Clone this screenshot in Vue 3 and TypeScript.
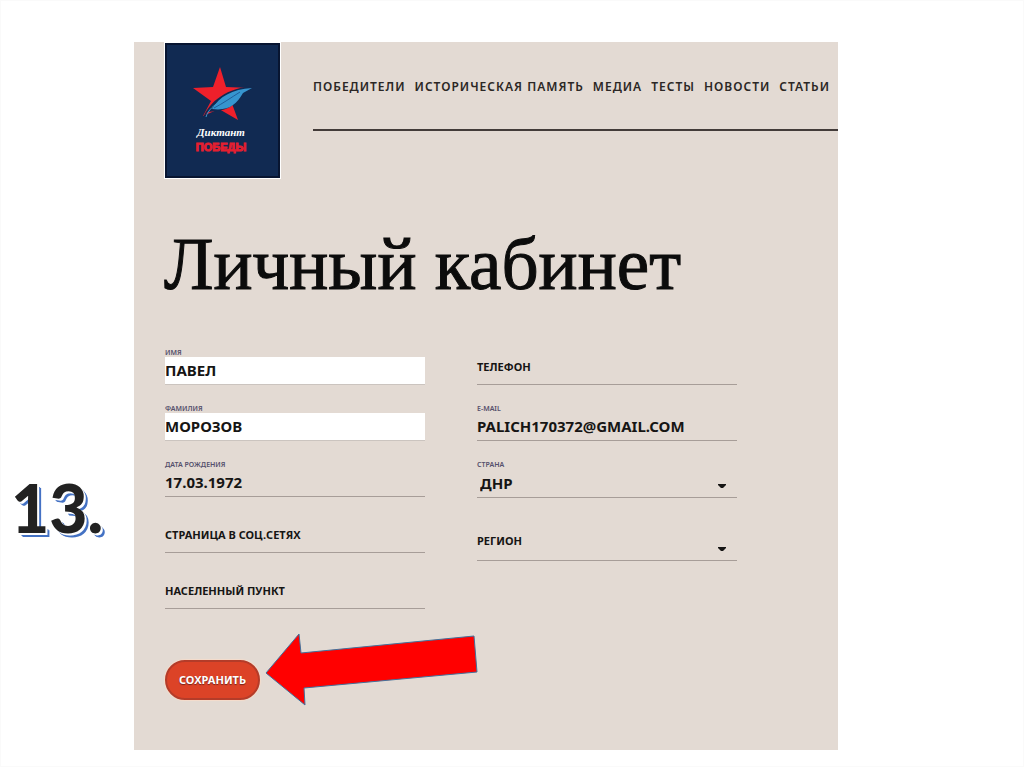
<script setup lang="ts">
import { reactive } from 'vue'

interface Field {
  id: string
  label: string
  type: 'text' | 'email' | 'tel' | 'select'
  floating: boolean
  filled?: boolean
}

const menu: string[] = ['ПОБЕДИТЕЛИ', 'ИСТОРИЧЕСКАЯ ПАМЯТЬ', 'МЕДИА', 'ТЕСТЫ', 'НОВОСТИ', 'СТАТЬИ']

const columns: Field[][] = [
  [
    { id: 'name', label: 'ИМЯ', type: 'text', floating: true, filled: true },
    { id: 'surname', label: 'ФАМИЛИЯ', type: 'text', floating: true, filled: true },
    { id: 'birth', label: 'ДАТА РОЖДЕНИЯ', type: 'text', floating: true },
    { id: 'social', label: 'СТРАНИЦА В СОЦ.СЕТЯХ', type: 'text', floating: false },
    { id: 'town', label: 'НАСЕЛЕННЫЙ ПУНКТ', type: 'text', floating: false },
  ],
  [
    { id: 'phone', label: 'ТЕЛЕФОН', type: 'tel', floating: false },
    { id: 'email', label: 'E-MAIL', type: 'email', floating: true },
    { id: 'country', label: 'СТРАНА', type: 'select', floating: true },
    { id: 'region', label: 'РЕГИОН', type: 'select', floating: false },
  ],
]

const values = reactive<Record<string, string>>({
  name: 'ПАВЕЛ',
  surname: 'МОРОЗОВ',
  birth: '17.03.1972',
  social: '',
  town: '',
  phone: '',
  email: 'PALICH170372@GMAIL.COM',
  country: 'ДНР',
  region: '',
})
</script>

<template>
  <div class="slide">
    <div class="step">13.</div>
    <main class="panel">
      <header class="header">
        <a class="logo" href="#" aria-label="Диктант Победы">
          <svg viewBox="0 0 113 133" width="113" height="133" aria-hidden="true">
            <path fill="#ee202b" d="M54 23 60 43 85 44 65 57 72 76 53 65 37 72 45 57 27 44 47 43Z" />
            <path fill="#112a52" d="M37 74C43 58 61 43 89 42L77 50C66 66 55 67 42 68Z" />
            <path fill="#3695cf" d="M46 65C53 53 66 45 86 44L77 49C70 61 63 67 46 65Z" />
            <path fill="none" stroke="#3695cf" d="M40 73C42 66 48 61 55 57" />
            <path fill="none" stroke="#1f5f9a" d="M48 64C56 60 66 53 74 48" />
            <text class="logo-script" x="55" y="92" text-anchor="middle">Диктант</text>
            <text class="logo-bold" x="55" y="107" text-anchor="middle">ПОБЕДЫ</text>
          </svg>
        </a>
        <nav class="menu">
          <a v-for="item in menu" :key="item" href="#">{{ item }}</a>
        </nav>
      </header>

      <h1>Личный кабинет</h1>

      <form @submit.prevent>
        <div class="fields">
          <div v-for="(column, index) in columns" :key="index" class="column">
            <div v-for="field in column" :key="field.id" class="field" :class="[field.type, { floating: field.floating, filled: field.filled }]">
              <label :for="field.id">{{ field.label }}</label>
              <div v-if="field.type === 'select'" class="select-box">
                <select :id="field.id" v-model="values[field.id]">
                  <option v-if="field.floating" value="ДНР">ДНР</option>
                  <option v-else value=""></option>
                </select>
                <svg class="caret" viewBox="0 0 8 4" width="8" height="4" aria-hidden="true"><path d="M0 0H8V1L5 4H3L0 1Z" /></svg>
              </div>
              <input v-else :id="field.id" v-model="values[field.id]" :type="field.type" />
            </div>
          </div>
        </div>
        <div class="actions">
          <button type="submit">СОХРАНИТЬ</button>
          <svg class="arrow" viewBox="0 0 214 74" width="214" height="74" aria-hidden="true">
            <path d="M2 41 35 2 37 21 210 4 213 40 40 56 41 73Z" />
          </svg>
        </div>
      </form>
    </main>
  </div>
</template>

<style>
body {
  margin: 0;
  background: #fff;
}
</style>

<style scoped>
.slide {
  box-sizing: border-box;
  display: grid;
  grid-template-columns: 134fr 704fr 186fr;
  min-height: 100vh;
  padding: 42px 0 17px;
  box-shadow: inset 0 0 0 1px #fafafa;
  font-family: "Noto Sans", sans-serif;
}
.step {
  padding: 416px 0 0 11px;
  color: #222;
  font: 900 66px/100px Lato, sans-serif;
  text-shadow: 1px 1px #fff, 2px 2px #fff, 3px 3px #4472c4, 4px 4px #4472c4;
}
.panel {
  min-width: 0;
  overflow: hidden;
  background: #e3dad3;
}
.header {
  display: flex;
  gap: 32px;
  padding-left: 30px;
}
.logo {
  flex: none;
  height: 133px;
  border: 1px solid #fff;
  background: #112a52;
  outline: 2px solid #081531;
  outline-offset: -3px;
  padding: 1px;
}
.logo svg {
  display: block;
}
.logo-script {
  fill: #fff;
  font: italic 700 11px "Liberation Serif", serif;
}
.logo-bold {
  fill: #e51f30;
  stroke: #e51f30;
  stroke-width: 1;
  font: 700 11px "Liberation Sans", sans-serif;
}
.menu {
  flex: 1;
  display: flex;
  box-sizing: border-box;
  gap: 9px;
  height: 89px;
  padding-top: 36px;
  border-bottom: 2px solid #433b39;
}
.menu a {
  color: #2b2725;
  font: 600 12px/18px "Noto Sans", sans-serif;
  letter-spacing: 1px;
  text-decoration: none;
  white-space: nowrap;
}
h1 {
  margin: 42px 0 0 30px;
  color: #0c0c0c;
  font: 400 73px/88px "Liberation Serif", serif;
  -webkit-text-stroke: 1px #0c0c0c;
  white-space: nowrap;
}
form {
  padding: 36px 101px 0 31px;
}
.fields {
  display: grid;
  grid-template-columns: 1fr 1fr;
  gap: 52px;
}
.column {
  display: flex;
  flex-direction: column;
  gap: 16px;
}
.field {
  box-sizing: border-box;
  height: 40px;
  padding-top: 12px;
  position: relative;
}
.field label {
  position: absolute;
  top: 14px;
  left: 0;
  color: #161514;
  font-size: 11px;
  font-weight: 700;
  line-height: 16px;
}
.field.floating label {
  top: 3px;
  color: #55506c;
  font-size: 7px;
  font-weight: 600;
  line-height: 10px;
}
input,
select {
  box-sizing: border-box;
  display: block;
  width: 100%;
  height: 28px;
  margin: 0;
  padding: 0 0 2px;
  border: 0;
  border-bottom: 1px solid #a79d98;
  border-radius: 0;
  outline: 0;
  background: transparent;
  color: #161514;
  font: 700 15px/20px "Noto Sans", sans-serif;
  appearance: none;
}
.filled input {
  border-color: #cbc4bf;
  background: #fff;
}
.select-box {
  position: relative;
}
.select {
  height: 41px;
}
.select select {
  height: 29px;
  padding: 0 0 0 3px;
}
.select:not(.floating) {
  height: 47px;
}
.select:not(.floating) label {
  top: 19px;
}
.select:not(.floating) select {
  height: 35px;
}
.caret {
  position: absolute;
  right: 11px;
  bottom: 10px;
  fill: #161514;
  pointer-events: none;
}
.actions {
  position: relative;
  display: flex;
  margin-top: 51px;
}
button {
  height: 40px;
  padding: 0 12px;
  border: 2px solid #b43c29;
  border-radius: 20px;
  background: #dc4327;
  box-shadow: 0 0 1px 1px #f5dccb;
  color: #fff;
  font: 700 11px/16px "Noto Sans", sans-serif;
  text-shadow: 0 1px 1px #71241a;
}
.arrow {
  position: absolute;
  left: 99px;
  top: -28px;
  fill: #f00;
  stroke: #41719c;
  stroke-width: 1;
}
</style>
